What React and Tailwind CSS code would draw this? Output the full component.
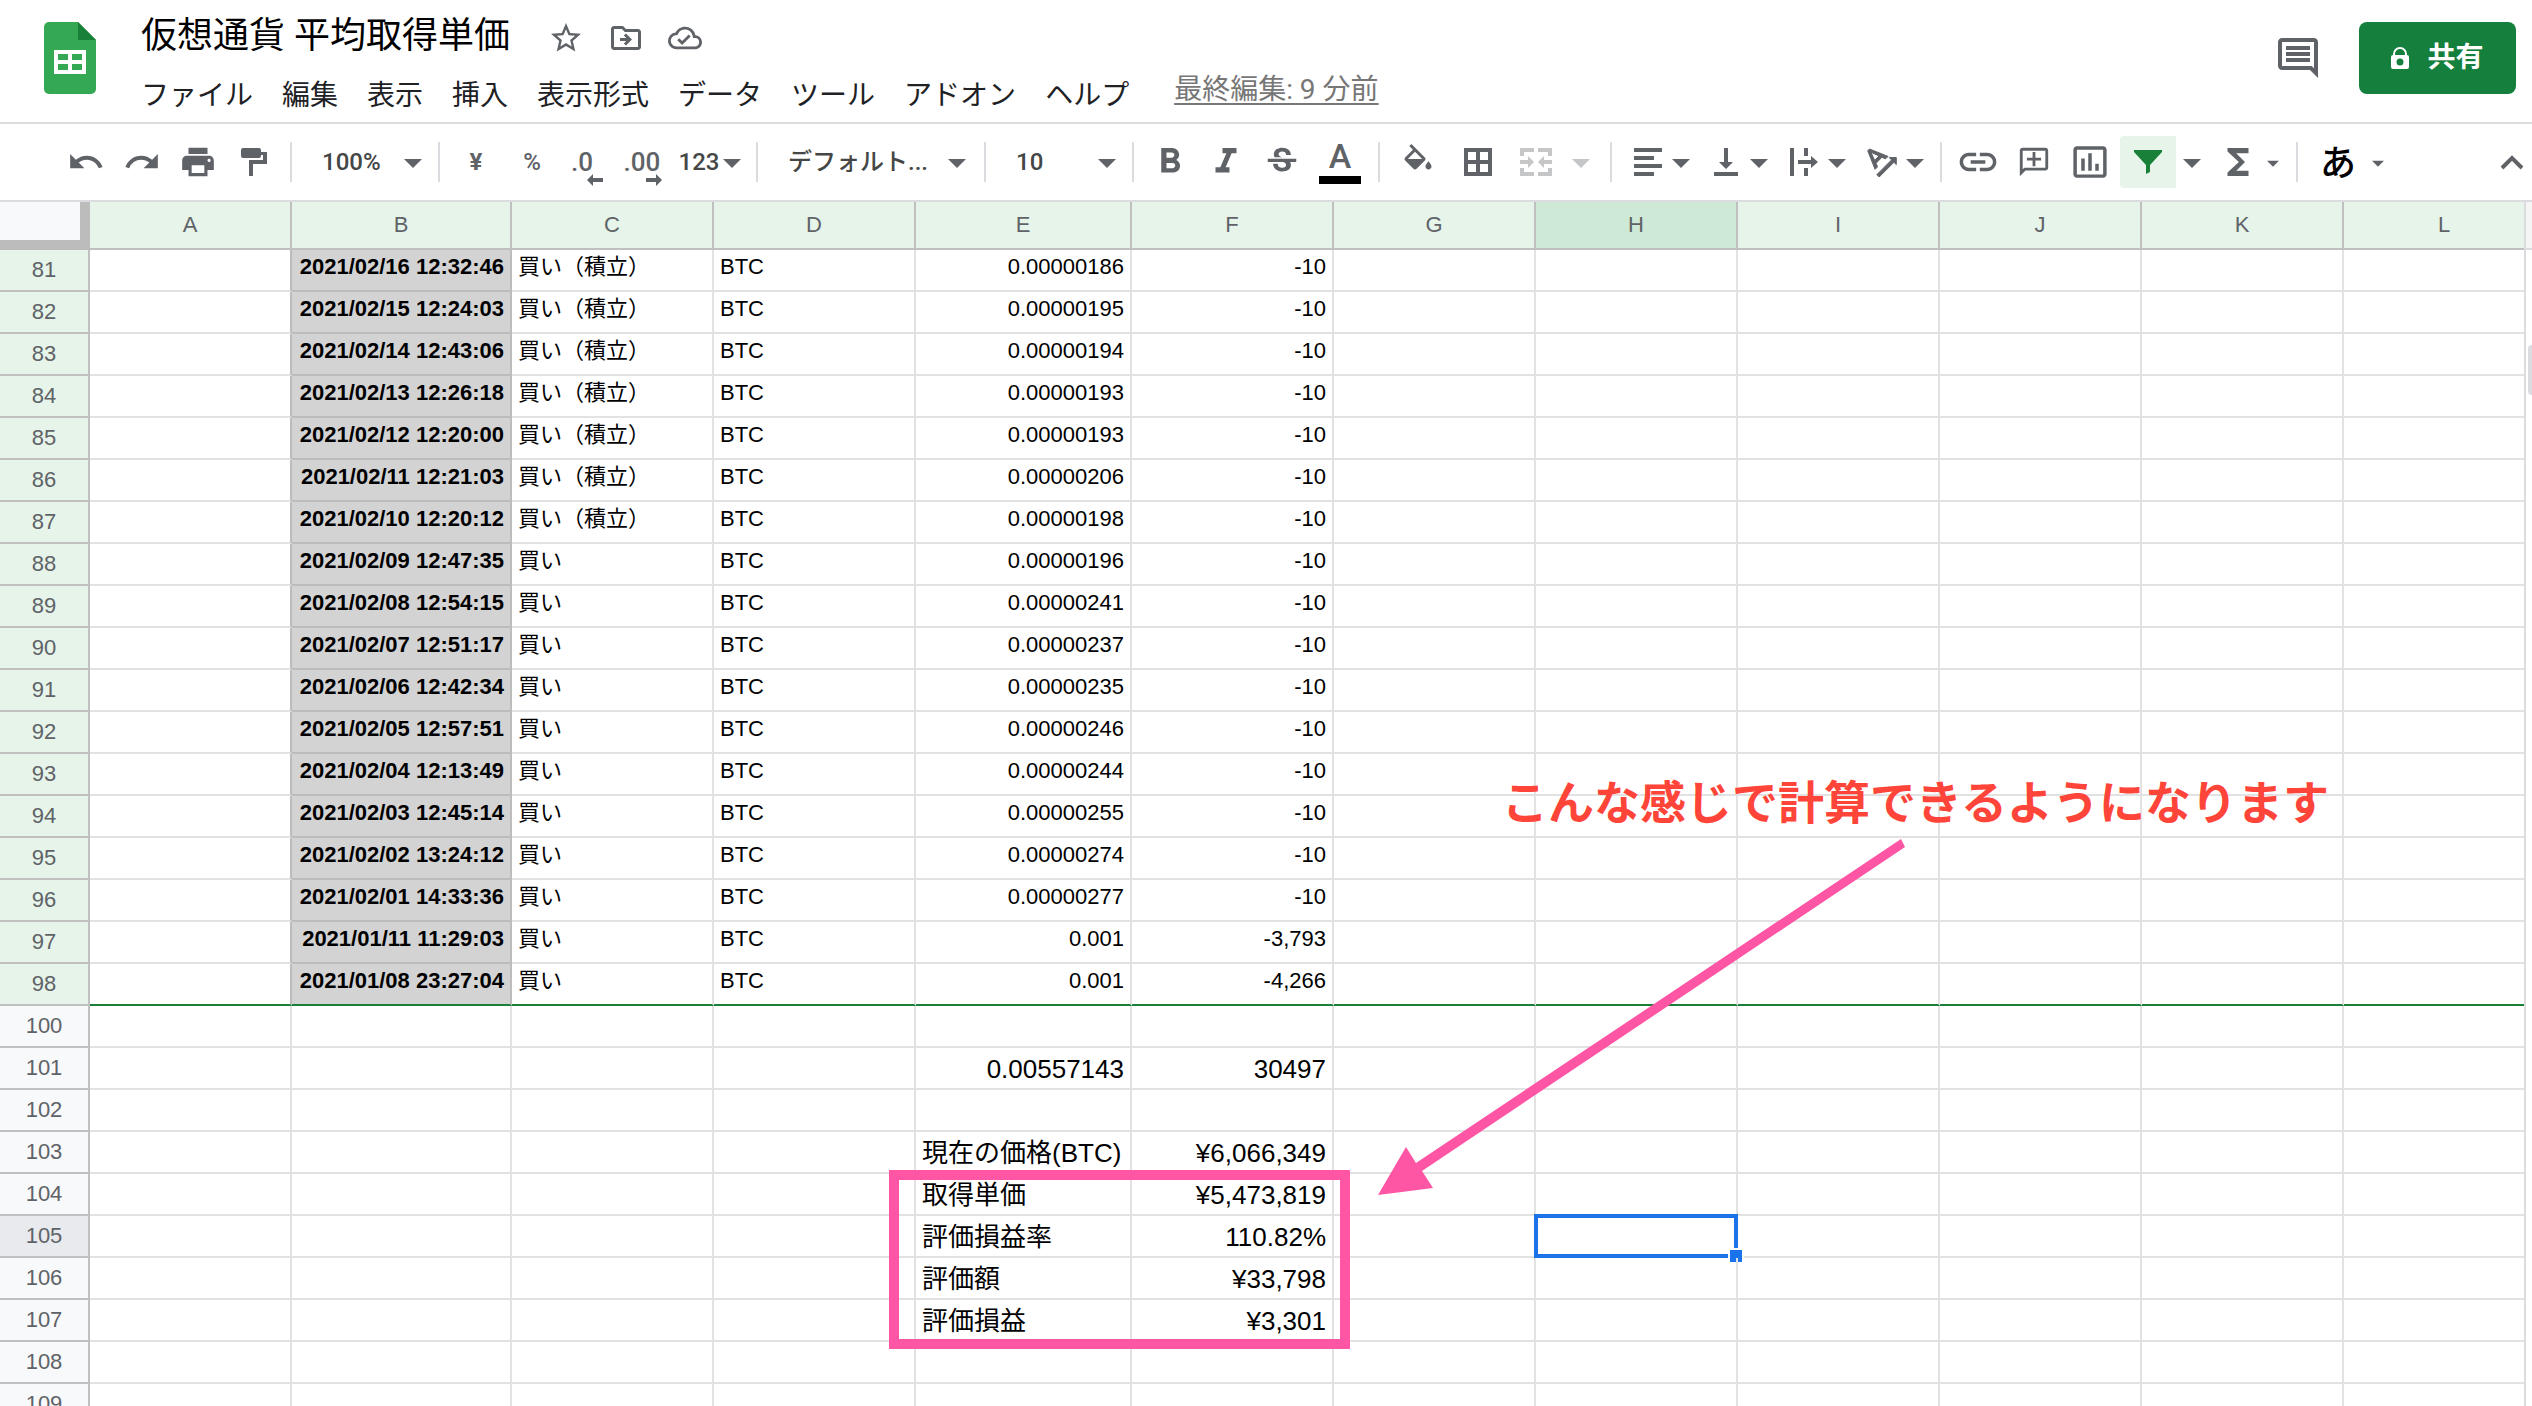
import React from "react";
import {
  MdStarBorder, MdOutlineDriveFileMove, MdOutlineCloudDone, MdUndo, MdRedo, MdPrint,
  MdFormatBold, MdFormatItalic, MdStrikethroughS, MdLink,
  MdOutlineAddComment, MdInsertChartOutlined, MdFunctions, MdOutlineInsertComment,
} from "react-icons/md";

const UI = "font-['Roboto','Noto_Sans_CJK_JP',sans-serif]";
const CELL = "font-['Liberation_Sans','Noto_Sans_CJK_JP',sans-serif]";

const menus = ["ファイル", "編集", "表示", "挿入", "表示形式", "データ", "ツール", "アドオン", "ヘルプ"];

const columns = [
  ["A", "w-[202px]"], ["B", "w-[220px]"], ["C", "w-[202px]"], ["D", "w-[202px]"],
  ["E", "w-[216px]"], ["F", "w-[202px]"], ["G", "w-[202px]"], ["H", "w-[202px]"],
  ["I", "w-[202px]"], ["J", "w-[202px]"], ["K", "w-[202px]"], ["L", "w-[202px]"],
];

const T = "買い（積立）";
const K = "買い";
const trades = [
  [81, "2021/02/16 12:32:46", T, "0.00000186", "-10"],
  [82, "2021/02/15 12:24:03", T, "0.00000195", "-10"],
  [83, "2021/02/14 12:43:06", T, "0.00000194", "-10"],
  [84, "2021/02/13 12:26:18", T, "0.00000193", "-10"],
  [85, "2021/02/12 12:20:00", T, "0.00000193", "-10"],
  [86, "2021/02/11 12:21:03", T, "0.00000206", "-10"],
  [87, "2021/02/10 12:20:12", T, "0.00000198", "-10"],
  [88, "2021/02/09 12:47:35", K, "0.00000196", "-10"],
  [89, "2021/02/08 12:54:15", K, "0.00000241", "-10"],
  [90, "2021/02/07 12:51:17", K, "0.00000237", "-10"],
  [91, "2021/02/06 12:42:34", K, "0.00000235", "-10"],
  [92, "2021/02/05 12:57:51", K, "0.00000246", "-10"],
  [93, "2021/02/04 12:13:49", K, "0.00000244", "-10"],
  [94, "2021/02/03 12:45:14", K, "0.00000255", "-10"],
  [95, "2021/02/02 13:24:12", K, "0.00000274", "-10"],
  [96, "2021/02/01 14:33:36", K, "0.00000277", "-10"],
  [97, "2021/01/11 11:29:03", K, "0.001", "-3,793"],
  [98, "2021/01/08 23:27:04", K, "0.001", "-4,266"],
];

const summary = [
  [100, "", ""],
  [101, "0.00557143", "30497"],
  [102, "", ""],
  [103, "現在の価格(BTC)", "¥6,066,349"],
  [104, "取得単価", "¥5,473,819"],
  [105, "評価損益率", "110.82%"],
  [106, "評価額", "¥33,798"],
  [107, "評価損益", "¥3,301"],
  [108, "", ""],
  [109, "", ""],
];

function Caret({ className = "w-[18px]" }) {
  return (
    <svg viewBox="0 0 18 10" className={"mt-1 h-[10px] shrink-0 " + className} aria-hidden="true">
      <path d="M0 0h18L9 9z" fill="currentColor" />
    </svg>
  );
}

function Glyph({ size = "size-7", box = "0 0 28 28", d, ...rest }) {
  return (
    <svg viewBox={box} className={"shrink-0 " + size} fill="currentColor" aria-hidden="true">
      <path d={d} {...rest} />
    </svg>
  );
}

function Sep() {
  return <div className="mx-2 h-10 w-0.5 shrink-0 bg-[#dadce0]" />;
}

function Tool({ label, className = "w-14", children }) {
  return (
    <button type="button" aria-label={label} className={"flex h-[52px] shrink-0 items-center justify-center " + className}>
      {children}
    </button>
  );
}

function DropTool({ label, children }) {
  return (
    <Tool label={label} className="w-[78px] gap-1">
      <span className="flex w-10 justify-center">{children}</span>
      <Caret />
    </Tool>
  );
}

function Picker({ label, value, className }) {
  return (
    <label className={"flex shrink-0 items-center text-[#444746] " + className}>
      <select aria-label={label} defaultValue={value} className="min-w-0 flex-1 appearance-none bg-transparent text-[24px] leading-8 font-medium outline-none">
        <option>{value}</option>
      </select>
      <Caret className="w-[18px] text-[#5f6368]" />
    </label>
  );
}

function SheetsLogo() {
  return (
    <svg viewBox="0 0 52 72" className="h-[72px] w-[52px] shrink-0" aria-label="スプレッドシート">
      <path d="M5 0h29l18 18v49a5 5 0 0 1-5 5H5a5 5 0 0 1-5-5V5a5 5 0 0 1 5-5z" fill="#34a853" />
      <path d="M34 0l18 18H34z" fill="#188038" />
      <path fillRule="evenodd" d="M10 28h32v24H10zM14 32v6h10v-6zM28 32v6h10v-6zM14 42v6h10v-6zM28 42v6h10v-6z" fill="#fff" />
    </svg>
  );
}

function Header() {
  return (
    <header className="flex h-[124px] items-start border-b-2 border-[#dadce0] pr-4 pl-11">
      <div className="pt-[22px]"><SheetsLogo /></div>
      <div className="ml-[45px] flex flex-col">
        <div className="flex items-center pt-2.5 text-[#5f6368]">
          <h1 className="text-[36px] leading-[52px] text-black">仮想通貨 平均取得単価</h1>
          <div className="mt-1 ml-[38px] flex items-center gap-6">
            <button type="button" aria-label="スター"><MdStarBorder size={36} /></button>
            <button type="button" aria-label="移動"><MdOutlineDriveFileMove size={36} /></button>
            <button type="button" aria-label="保存状況"><MdOutlineCloudDone size={34} /></button>
          </div>
        </div>
        <nav className="flex items-center gap-[29px] pt-3.5 text-[28px] leading-10 text-[#202124]">
          {menus.map((m) => <button key={m} type="button">{m}</button>)}
          <a href="#history" className="-mt-3 ml-4 text-[#777] underline underline-offset-4">最終編集: 9 分前</a>
        </nav>
      </div>
      <div className="ml-auto flex items-center gap-[37px] pt-[22px]">
        <button type="button" aria-label="コメント" className="text-[#5f6368]"><MdOutlineInsertComment size={48} /></button>
        <button type="button" className="flex h-[72px] w-[157px] items-center justify-center gap-[18px] rounded-lg bg-[#15803d] text-[28px] font-bold text-white">
          <svg viewBox="0 0 18 22" className="h-[22px] w-[18px]" aria-hidden="true">
            <path fillRule="evenodd" d="M2 8V7a7 7 0 0 1 14 0v1a2 2 0 0 1 2 2v10a2 2 0 0 1-2 2H2a2 2 0 0 1-2-2V10a2 2 0 0 1 2-2zM4 8h10V7A5 5 0 0 0 4 7zM9 11.500a3.500 3.500 0 1 0 0 7 3.500 3.500 0 0 0 0-7z" fill="currentColor" />
          </svg>
          共有
        </button>
      </div>
    </header>
  );
}

function Toolbar() {
  return (
    <div role="toolbar" className="flex h-[78px] items-center border-b-2 border-[#dadce0] pl-[58px] text-[#5f6368]">
      <Tool label="元に戻す"><MdUndo size={38} /></Tool>
      <Tool label="やり直す"><MdRedo size={38} /></Tool>
      <Tool label="印刷"><MdPrint size={38} /></Tool>
      <Tool label="書式を貼り付け">
        <Glyph box="0 0 26 28" size="h-7 w-[26px]" d="M2 0h16a2 2 0 0 1 2 2v2h6v12H12v12H8V12h14V7h-2v1a2 2 0 0 1-2 2H2a2 2 0 0 1-2-2V2a2 2 0 0 1 2-2z" />
      </Tool>
      <Sep />
      <Picker label="ズーム" value="100%" className="-mx-2 w-[146px] pr-4 pl-[30px]" />
      <Sep />
      <Tool label="通貨"><span className="text-[24px] font-bold">¥</span></Tool>
      <Tool label="パーセント"><span className="text-[24px] font-medium">%</span></Tool>
      <Tool label="小数点以下の桁数を減らす" className="w-11">
        <span className="relative text-[26px] leading-8 font-medium">.0
          <span className="absolute -right-2.5 -bottom-2"><Glyph box="0 0 16 12" size="h-3 w-4" d="M0 6l6-6v4h10v4H6v4z" /></span>
        </span>
      </Tool>
      <Tool label="小数点以下の桁数を増やす" className="w-[68px] pl-2">
        <span className="relative text-[26px] leading-8 font-medium">.00
          <span className="absolute -right-0.5 -bottom-2"><Glyph box="0 0 16 12" size="h-3 w-4" d="M16 6l-6-6v4H0v4h10v4z" /></span>
        </span>
      </Tool>
      <Tool label="表示形式の詳細" className="w-[76px] gap-1 text-[#444746]">
        <span className="text-[24px] font-medium">123</span>
        <Caret className="w-[18px] text-[#5f6368]" />
      </Tool>
      <Sep />
      <Picker label="フォント" value="デフォルト..." className="-mx-2 w-[226px] pr-[18px] pl-[30px]" />
      <Sep />
      <Picker label="フォントサイズ" value="10" className="-mx-2 w-[146px] pr-4 pl-[30px]" />
      <Sep />
      <Tool label="太字"><MdFormatBold size={42} /></Tool>
      <Tool label="斜体"><MdFormatItalic size={42} /></Tool>
      <Tool label="取り消し線"><MdStrikethroughS size={38} /></Tool>
      <Tool label="テキストの色" className="w-[60px]">
        <span className="flex flex-col items-center">
          <span className="text-[34px] leading-8 font-medium">A</span>
          <span className="mt-1 h-2 w-[42px] bg-black" />
        </span>
      </Tool>
      <Sep />
      <Tool label="塗りつぶしの色" className="w-[60px]">
        <Glyph box="0 0 24 24" size="size-9" d="M16.560 8.940 7.620 0 6.210 1.410l2.380 2.380-5.150 5.150a1.490 1.490 0 0 0 0 2.120l5.500 5.500c.29.29.68.44 1.060.44s.77-.15 1.060-.44l5.500-5.500c.59-.58.59-1.530 0-2.120zM5.210 10 10 5.210 14.790 10zM19 11.500s-2 2.170-2 3.500c0 1.100.9 2 2 2s2-.9 2-2c0-1.330-2-3.500-2-3.500z" />
      </Tool>
      <Tool label="枠線" className="w-[60px]">
        <Glyph fillRule="evenodd" d="M0 0h28v28H0zM4 4v8h8V4zM16 4v8h8V4zM4 16v8h8v-8zM16 16v8h8v-8z" />
      </Tool>
      <Tool label="セルを結合" className="w-[94px] gap-5 text-[#c4c6c8]">
        <Glyph box="0 0 32 28" size="h-7 w-8" d="M0 0h14v4H4v4H0zM18 0h14v8h-4V4H18zM0 20h4v4h10v4H0zM28 20h4v8H18v-4h10zM0 12h8V8l6 6-6 6v-4H0zM32 12h-8V8l-6 6 6 6v-4h8z" />
        <Caret />
      </Tool>
      <Sep />
      <DropTool label="水平方向の配置"><Glyph d="M0 0h28v4H0zM0 8h20v4H0zM0 16h28v4H0zM0 24h20v4H0z" /></DropTool>
      <DropTool label="垂直方向の配置"><Glyph box="0 0 24 28" size="h-7 w-6" d="M10 0h4v14h5l-7 7-7-7h5zM0 24h24v4H0z" /></DropTool>
      <DropTool label="テキストの折り返し"><Glyph d="M0 0h4v28H0zM14 0h4v8h-4zM14 20h4v8h-4zM8 12h13V8l7 6-7 6v-4H8z" /></DropTool>
      <DropTool label="テキストの回転">
        <Glyph box="0 0 24 24" size="size-10" stroke="currentColor" strokeWidth="0.6" d="m4.490 4.210L3.430 5.270 7.850 16.400l1.480-1.480-.92-2.190 3.540-3.540 2.190.92 1.480-1.480L4.490 4.210zm3.090 6.800L5.360 6.140l4.870 2.230-2.650 2.640zm12.990-1.680h-4.240l1.410 1.410-8.840 8.840L10.320 21l8.840-8.840 1.410 1.410V9.330z" />
      </DropTool>
      <Sep />
      <Tool label="リンクを挿入"><MdLink size={44} /></Tool>
      <Tool label="コメントを挿入"><MdOutlineAddComment size={34} className="-scale-x-100" /></Tool>
      <Tool label="グラフを挿入"><MdInsertChartOutlined size={42} /></Tool>
      <Tool label="フィルタ" className="ml-0.5 w-14 rounded-l bg-[#e6f4ea]">
        <svg viewBox="0 0 28 24" className="h-6 w-7" aria-hidden="true"><path d="M0 0h28v2L16 15v7l-4 2v-9L0 2z" fill="#188038" /></svg>
      </Tool>
      <Tool label="フィルタ表示" className="w-8"><Caret /></Tool>
      <Tool label="関数" className="w-20 gap-2">
        <MdFunctions size={42} />
        <Caret className="w-3" />
      </Tool>
      <Sep />
      <Tool label="入力ツール" className="w-[92px] gap-4">
        <span className="pt-1 text-[36px] leading-10 font-medium text-black">あ</span>
        <Caret className="w-3" />
      </Tool>
      <Tool label="メニューを非表示" className="ml-auto w-10">
        <Glyph box="0 0 24 16" size="h-4 w-6" fill="none" stroke="currentColor" strokeWidth="4" d="M2 14L12 4l10 10" />
      </Tool>
    </div>
  );
}

const rowHead = "h-[42px] border-r-2 border-b-2 border-[#c0c0c0] p-0 align-middle text-[22px] leading-8 font-normal text-[#5f6368]";
const cell = "border-r-2 border-b-2 border-[#e2e2e2] p-0 align-top";

function Sheet() {
  return (
    <table className={"w-max table-fixed border-separate border-spacing-0 text-[22px] leading-[34px] text-black " + CELL}>
      <colgroup>
        <col className="w-[90px]" />
        {columns.map(([c, w]) => <col key={c} className={w} />)}
      </colgroup>
      <thead>
        <tr>
          <th aria-label="すべて選択" className="h-12 w-[90px] border-r-[10px] border-b-[10px] border-[#bcbcbc] bg-[#f8f9fa] p-0" />
          {columns.map(([c, w]) => (
            <th key={c} scope="col" className={"h-12 border-r-2 border-b-2 border-[#c0c0c0] p-0 font-normal text-[#5f6368] " + w + (c === "H" ? " bg-[#ceead6]" : " bg-[#e6f4ea]")}>{c}</th>
          ))}
        </tr>
      </thead>
      <tbody>
        {trades.map(([n, date, kind, amount, yen]) => {
          const c = n === 98 ? "border-r-2 border-b-2 border-r-[#e2e2e2] border-b-[#188038] p-0 align-top" : cell;
          return (
            <tr key={n}>
              <th scope="row" className={rowHead + " bg-[#e6f4ea]"}>{n}</th>
              <td className={n === 98 ? "border-r-2 border-b-2 border-r-[#bcbcbc] border-b-[#188038]" : "border-r-2 border-b-2 border-r-[#bcbcbc] border-b-[#e2e2e2]"} />
              <td className={"border-r-2 border-b-2 border-r-[#bcbcbc] bg-[#d3d3d3] p-0 pr-1.5 text-right align-top font-bold whitespace-nowrap " + (n === 98 ? "border-b-[#188038]" : "border-b-[#bcbcbc]")}>{date}</td>
              <td className={c + " pl-1.5"}>{kind}</td>
              <td className={c + " pl-1.5"}>BTC</td>
              <td className={c + " pr-1.5 text-right"}>{amount}</td>
              <td className={c + " pr-1.5 text-right"}>{yen}</td>
              {["G", "H", "I", "J", "K", "L"].map((k) => <td key={k} className={c} />)}
            </tr>
          );
        })}
        {summary.map(([n, e, f]) => (
          <tr key={n}>
            <th scope="row" className={rowHead + (n === 105 ? " bg-[#e8eaed]" : " bg-[#f8f9fa]")}>{n}</th>
            {["A", "B", "C", "D"].map((k) => <td key={k} className={cell} />)}
            <td className={cell + " px-1.5 pt-1 text-[26px] whitespace-nowrap" + (n === 101 ? " text-right" : "")}>{e}</td>
            <td className={cell + " px-1.5 pt-1 text-right text-[26px]"}>{f}</td>
            <td className={cell} />
            <td className={cell + " relative"}>
              {n === 105 && (
                <div className="absolute -inset-0.5 border-4 border-[#1a73e8]">
                  <div className="absolute -right-2.5 -bottom-2.5 size-4 border-2 border-white bg-[#1a73e8]" />
                </div>
              )}
            </td>
            {["I", "J", "K", "L"].map((k) => <td key={k} className={cell} />)}
          </tr>
        ))}
      </tbody>
    </table>
  );
}

function Annotations() {
  return (
    <div className="pointer-events-none absolute inset-0">
      <div className="absolute top-[968px] left-[889px] h-[179px] w-[461px] border-10 border-[#ff55a5]" />
      <p className="absolute top-[567px] left-[1502px] text-[46px] leading-[68px] font-bold whitespace-nowrap text-[#ff4539]">こんな感じで計算できるようになります</p>
      <svg viewBox="1378 839 530 356" className="absolute top-[637px] left-[1378px] h-[356px] w-[530px]" aria-hidden="true">
        <path d="M1378 1195L1406 1147L1416 1163L1901 839L1905 847L1422 1171L1433 1188z" fill="#ff55a5" />
      </svg>
    </div>
  );
}

export default function App() {
  return (
    <div className={"flex h-screen flex-col overflow-hidden bg-white " + UI}>
      <Header />
      <Toolbar />
      <main className="relative flex min-h-0 flex-1 overflow-hidden">
        <div className="min-w-0 flex-1 overflow-hidden"><Sheet /></div>
        <div className="w-2 shrink-0 border-l-2 border-[#dadce0] bg-white">
          <div className="h-12 border-b-2 border-[#dadce0] bg-[#f5f5f5]" />
          <div className="mt-[95px] ml-0.5 h-[50px] rounded-l bg-[#dadce0]" />
        </div>
        <Annotations />
      </main>
    </div>
  );
}
